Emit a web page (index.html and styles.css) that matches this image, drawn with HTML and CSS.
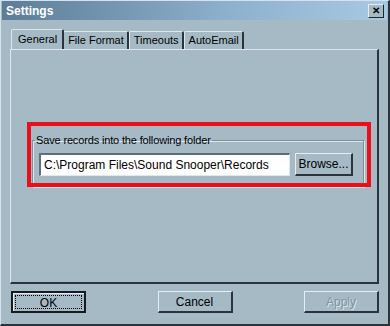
FILE: index.html
```html
<!DOCTYPE html>
<html lang="en">
<head>
  <meta charset="UTF-8" />
  <title>Settings</title>
  <link rel="stylesheet" href="styles.css">
</head>
<body>

  <div class="window">
    <div class="titlebar">
      <span class="title">Settings</span>
      <button class="close">&#x2715;</button>
    </div>

    <div class="tabs">
      <div class="tab active">General</div>
      <div class="tab">File Format</div>
      <div class="tab">Timeouts</div>
      <div class="tab">AutoEmail</div>
    </div>

    <div class="panel">
      <fieldset class="group">
        <legend>Save records into the following folder</legend>
        <div class="row">
          <input type="text" class="path" value="C:\Program Files\Sound Snooper\Records" />
          <button class="btn browse">Browse...</button>
        </div>
      </fieldset>
      <div class="highlight"></div>
    </div>

    <div class="buttons">
      <button class="btn default"><span class="focus">OK</span></button>
      <button class="btn">Cancel</button>
      <button class="btn disabled">Apply</button>
    </div>
  </div>

</body>
</html>
```

FILE: styles.css
```css
* {
  box-sizing: border-box;
}

body {
  margin: 0;
  font-family: "Liberation Sans", Arial, sans-serif;
  font-size: 11px;
  color: #000;
}

.window {
  width: 390px;
  height: 326px;
  background-color: #a6bac6;
  border-top: 1px solid #d6e2ea;
  border-left: 1px solid #d6e2ea;
  border-right: 2px solid #2a343a;
  border-bottom: 2px solid #2a343a;
}

.titlebar {
  height: 19px;
  margin: 0 1px;
  display: flex;
  align-items: center;
  justify-content: space-between;
  padding: 0 3px 0 4px;
  background: linear-gradient(to right, #5d7d97, #8eb1cd 60%, #a8c9e4);
}

.title {
  color: #fff;
  font-weight: bold;
  font-size: 12px;
}

.close {
  width: 16px;
  height: 14px;
  padding: 0;
  font-size: 10px;
  line-height: 10px;
  font-weight: bold;
  background-color: #a6bac6;
  border-top: 1px solid #e4eef4;
  border-left: 1px solid #e4eef4;
  border-right: 1px solid #1e272c;
  border-bottom: 1px solid #1e272c;
  color: #000;
}

.tabs {
  display: flex;
  margin: 9px 0 0 10px;
  height: 20px;
  align-items: flex-end;
}

.tab {
  height: 18px;
  padding: 2px 3px 0 4px;
  border-top: 1px solid #dce7ee;
  border-left: 1px solid #dce7ee;
  border-right: 2px solid #2a343a;
  border-top-left-radius: 2px;
  border-top-right-radius: 2px;
}

.tab.active {
  height: 20px;
  padding: 3px 5px 0 6px;
  margin-right: -1px;
  position: relative;
  z-index: 1;
  background-color: #a6bac6;
}

.panel {
  position: relative;
  margin-left: 9px;
  width: 369px;
  height: 235px;
  border-top: 1px solid #dce7ee;
  border-left: 1px solid #dce7ee;
  border-right: 2px solid #2a343a;
  border-bottom: 2px solid #2a343a;
  padding: 84px 13px 0 21px;
}

.group {
  margin: 0;
  height: 53px;
  padding: 7px 10px 0 6px;
  border: 1px solid #7c8f9b;
  box-shadow: 1px 1px 0 #dce7ee, inset 1px 1px 0 #dce7ee;
}

.group legend {
  padding: 0 1px;
  margin-left: -4px;
  font-size: 11px;
  letter-spacing: -0.15px;
}

.row {
  display: flex;
  justify-content: space-between;
  align-items: center;
}

.path {
  width: 251px;
  height: 23px;
  font-family: "Liberation Sans", Arial, sans-serif;
  font-size: 12px;
  padding: 0 3px;
  background-color: #fff;
  border-top: 2px solid #5e6f79;
  border-left: 2px solid #5e6f79;
  border-right: 1px solid #dce7ee;
  border-bottom: 1px solid #dce7ee;
}

.btn {
  font-family: "Liberation Sans", Arial, sans-serif;
  font-size: 12px;
  width: 75px;
  height: 22px;
  padding: 0;
  color: #000;
  background-color: #a6bac6;
  border-top: 1px solid #e4eef4;
  border-left: 1px solid #e4eef4;
  border-right: 2px solid #2a343a;
  border-bottom: 2px solid #2a343a;
}

.browse {
  width: 58px;
  height: 23px;
}

.highlight {
  position: absolute;
  left: 16px;
  top: 72px;
  width: 344px;
  height: 65px;
  border: 4px solid #e8101a;
}

.buttons {
  display: flex;
  justify-content: space-between;
  padding: 0 9px 0 10px;
  margin-top: 7px;
}

.btn.default {
  border: 2px solid #151b1f;
  box-shadow: inset 1px 1px 0 #e4eef4;
  padding: 2px;
}

.focus {
  display: block;
  height: 100%;
  line-height: 14px;
  border: 1px dotted #000;
}

.btn.disabled {
  color: #7f929e;
  text-shadow: 1px 1px 0 #dce7ee;
}
```
